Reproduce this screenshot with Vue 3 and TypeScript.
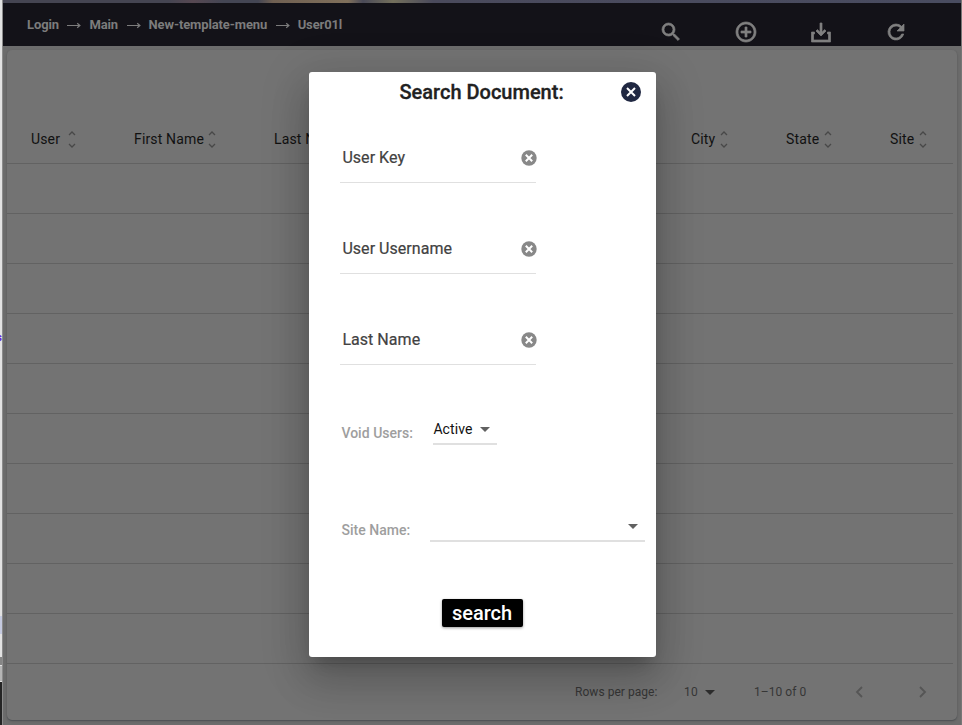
<script setup lang="ts">
import { ref } from 'vue'

interface Column { label: string; width: number; gap: number }

const crumbs: string[] = ['Login', 'Main', 'New-template-menu', 'User01l']
const columns: Column[] = [
  { label: 'User', width: 103, gap: 8 },
  { label: 'First Name', width: 140, gap: 4 },
  { label: 'Last Name', width: 417, gap: 4 },
  { label: 'City', width: 95, gap: 5 },
  { label: 'State', width: 104, gap: 5 },
  { label: 'Site', width: 60, gap: 5 },
]
const fields = ref<string[]>(['User Key', 'User Username', 'Last Name'])
const rowCount = 10
</script>

<template>
  <div class="screen">
    <aside class="edge">
      <span class="edge-text">s</span>
      <i class="edge-a"></i><i class="edge-b"></i><i class="edge-c"></i><i class="edge-d"></i><i class="edge-e"></i>
    </aside>

    <main class="page">
      <div class="strip"></div>
      <header class="topbar">
        <nav class="crumbs">
          <template v-for="(crumb, i) in crumbs" :key="crumb">
            <svg v-if="i > 0" class="arrow" width="14" height="7" viewBox="0 0 14 7"><path d="M0 3.5H13M10.2 1.300l2.700 2.200L10.2 5.700" /></svg>
            <span>{{ crumb }}</span>
          </template>
        </nav>
        <div class="tools">
          <svg viewBox="0 0 24 24"><path d="M15.5 14h-.79l-.28-.27A6.47 6.47 0 0 0 16 9.5 6.5 6.5 0 1 0 9.5 16c1.61 0 3.09-.59 4.23-1.57l.27.28v.79l5 4.99L20.49 19l-4.99-5zm-6 0C7.01 14 5 11.99 5 9.5S7.01 5 9.5 5 14 7.01 14 9.5 11.99 14 9.5 14z" /></svg>
          <svg viewBox="0 0 24 24"><path d="M13 7h-2v4H7v2h4v4h2v-4h4v-2h-4V7zm-1-5C6.48 2 2 6.48 2 12s4.48 10 10 10 10-4.48 10-10S17.52 2 12 2zm0 18c-4.41 0-8-3.59-8-8s3.59-8 8-8 8 3.59 8 8-3.59 8-8 8z" /></svg>
          <svg viewBox="0 0 24 24"><path d="M11 3h2v9.2l2.6-2.6L17 11l-5 5-5-5 1.400-1.400L11 12.200zM2.500 12h3v2H4.500v6h15v-6h-1v-2h3v10h-19z" /></svg>
          <svg viewBox="0 0 24 24"><path d="M17.650 6.350A7.960 7.960 0 0 0 12 4a8 8 0 1 0 7.730 10h-2.080A6 6 0 1 1 12 6c1.660 0 3.140.69 4.220 1.780L13 11h7V4z" /></svg>
        </div>
      </header>

      <section class="card">
        <div class="thead">
          <div v-for="col in columns" :key="col.label" class="th" :style="{ width: col.width + 'px', gap: col.gap + 'px' }">
            <span>{{ col.label }}</span>
            <svg width="8" height="17" viewBox="0 0 8 17"><path d="M1 4l3-3 3 3M1 13l3 3 3-3" /></svg>
          </div>
        </div>
        <div v-for="n in rowCount" :key="n" class="row"></div>
        <footer class="pager">
          <span class="rpp">Rows per page:</span>
          <span class="size">10</span>
          <svg class="caret" width="10" height="5" viewBox="0 0 10 5"><path d="M0 0h10L5 5z" /></svg>
          <span class="range">1–10 of 0</span>
          <svg class="chev prev" width="8" height="12" viewBox="0 0 8 12"><path d="M7 1L2 6l5 5" /></svg>
          <svg class="chev" width="8" height="12" viewBox="0 0 8 12"><path d="M1 1l5 5-5 5" /></svg>
        </footer>
      </section>
    </main>

    <div class="dialog" role="dialog">
      <div class="title">
        <h2>Search Document:</h2>
        <svg class="close" width="20" height="20" viewBox="0 0 20 20"><circle cx="10" cy="10" r="10" /><path d="M6 6l8 8M14 6l-8 8" /></svg>
      </div>
      <div class="fields">
        <div v-for="field in fields" :key="field" class="field">
          <span>{{ field }}</span>
          <svg width="16" height="16" viewBox="0 0 16 16"><circle cx="8" cy="8" r="7.700" /><path d="M4.800 4.800l6.400 6.400M11.200 4.800l-6.400 6.400" /></svg>
        </div>
      </div>
      <div class="line">
        <label class="void-label">Void Users:</label>
        <div class="select small">
          <span>Active</span>
          <svg width="10" height="5" viewBox="0 0 10 5"><path d="M0 0h10L5 5z" /></svg>
        </div>
      </div>
      <div class="line site">
        <label>Site Name:</label>
        <div class="select wide">
          <svg width="10" height="5" viewBox="0 0 10 5"><path d="M0 0h10L5 5z" /></svg>
        </div>
      </div>
      <button class="submit">search</button>
    </div>
  </div>
</template>

<style>
body { overflow: hidden; }
</style>

<style scoped>
* { box-sizing: border-box; }
svg { flex: none; display: block; }
.screen { position: relative; display: flex; width: 962px; height: 725px; overflow: hidden; font-family: Roboto, sans-serif; background: #6a6a6a; }
.edge { display: flex; flex-direction: column; width: 3px; height: 725px; background: #e2e2e2; border-right: 1px solid #8b8b8b; flex: none; }
.edge-text { height: 616px; padding-top: 332px; font-size: 11px; font-weight: 700; line-height: 12px; color: #6420e0; direction: rtl; flex: none; }
.edge i { display: block; flex: none; }
.edge-a { height: 18px; background: #c5cae0; }
.edge-b { height: 23px; background: #e2e2e2; }
.edge-c { height: 8px; background: #858585; }
.edge-d { height: 17px; background: #b5b5b5; border-top: 1px solid #e2e2e2; border-bottom: 1px solid #e2e2e2; }
.edge-e { height: 43px; background: #252525; }
.page { display: flex; flex-direction: column; width: 959px; border-right: 1px solid #777; background: #6c6c6c; }
.strip { height: 3px; flex: none; background: linear-gradient(90deg, #454552 0, #454552 165px, #574852 190px, #444654 220px, #444654 255px, #706052 270px, #80705b 345px, #4a4a58 360px, #74705c 390px, #4a4a5c 430px, #494c60 100%); }
.topbar { display: flex; justify-content: space-between; height: 43px; flex: none; background: #131218; }
.crumbs { display: flex; height: 43px; padding-left: 24px; align-items: center; font-size: 13px; font-weight: 700; line-height: 16px; letter-spacing: -.12px; color: #7c7c7c; }
.arrow { margin: 2px 8px 0 8.500px; }
.arrow path { fill: none; stroke: #7c7c7c; stroke-width: 1.200; }
.tools { display: flex; gap: 51px; padding: 17px 53px 0 0; }
.tools svg { width: 24px; height: 24px; fill: #808080; stroke: #808080; stroke-width: .7; }
.card { height: 670px; margin: 4px 4px 0; border-radius: 5px; background: #737373; box-shadow: 0 1px 1px #505357, 0 1px 3px rgba(0,0,0,.15); }
.thead { display: flex; height: 114px; width: 946px; padding: 65px 0 0 24px; border-bottom: 1px solid #626262; }
.th { display: flex; align-items: center; height: 48px; font-size: 14px; letter-spacing: .16px; color: #111; white-space: nowrap; }
.th path { fill: none; stroke: #484848; stroke-width: 1.300; }
.row { width: 946px; height: 50px; border-bottom: 1px solid #626262; }
.pager { display: flex; align-items: center; height: 56px; padding-left: 568px; font-size: 12px; color: #363636; letter-spacing: .04px; white-space: nowrap; }
.rpp { width: 109px; }
.size { width: 21px; letter-spacing: .3px; }
.caret { fill: #2c2c2c; margin-right: 39px; }
.range { width: 101px; }
.chev path { fill: none; stroke: #555; stroke-width: 1.800; }
.prev { margin-right: 56px; }
.dialog { position: absolute; left: 309px; top: 72px; width: 347px; height: 585px; display: flex; flex-direction: column; border-radius: 3px; background: #fff; box-shadow: 0 11px 15px -7px rgba(0,0,0,.2), 0 24px 38px 3px rgba(0,0,0,.14), 0 9px 46px 8px rgba(0,0,0,.12); }
.title { display: flex; justify-content: space-between; height: 71px; padding: 10px 15.500px 0 90.500px; }
.title h2 { margin: -4px 0 0; font-size: 20px; line-height: 28px; font-weight: 500; color: #212121; -webkit-text-stroke: .3px #212121; white-space: nowrap; }
.close circle { fill: #202842; }
.close path { fill: none; stroke: #fff; stroke-width: 2; }
.fields { display: flex; flex-direction: column; gap: 51px; padding-left: 31.400px; }
.field { display: flex; align-items: center; justify-content: space-between; width: 196px; height: 40px; padding: 0 0 9px 2px; border-bottom: 1px solid #e0e0e0; font-size: 16px; line-height: 24px; letter-spacing: .04px; color: #424242; -webkit-text-stroke: .2px #424242; }
.field svg { margin-right: -1px; }
.field circle { fill: #888; }
.field path { fill: none; stroke: #fff; stroke-width: 2; }
.line { display: flex; height: 26px; margin-top: 54px; padding-left: 32.400px; color: #9e9e9e; font-size: 14px; font-weight: 500; line-height: 28px; letter-spacing: .03px; }
.line label { width: 92px; white-space: nowrap; }
.select { display: flex; justify-content: space-between; border-bottom: 2px solid #e0e0e0; height: 26px; color: #111; font-weight: 400; line-height: 20px; letter-spacing: .1px; }
.select svg { fill: #616161; margin-top: 8px; }
.small { width: 64px; padding-right: 7px; }
.site { margin-top: 71px; }
.site label { width: 89px; }
.wide { width: 215px; justify-content: flex-end; padding-right: 7px; }
.submit { display: block; align-self: center; width: 81px; height: 28px; margin: 57px 0 0; border: 0; border-radius: 2px; padding: 0 1px 0 0; background: #000; color: #fff; font: 500 20px/28px Roboto, sans-serif; box-shadow: 0 1px 3px rgba(0,0,0,.4); }
</style>
